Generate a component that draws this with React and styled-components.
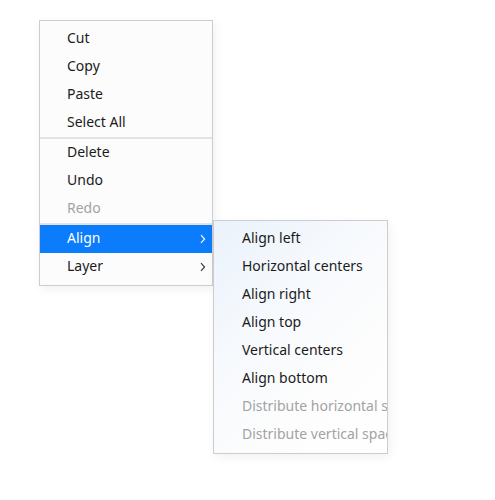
import React from "react";
import styled, { createGlobalStyle } from "styled-components";

const Global = createGlobalStyle`
  html, body { margin: 0; padding: 0; background: #ffffff; }
  body { font-family: "Noto Sans", "Open Sans", sans-serif; }
`;

const Page = styled.div`
  width: 495px;
  height: 500px;
  padding: 20px 0 0 39px;
  box-sizing: border-box;
`;

const Menu = styled.ul`
  list-style: none;
  margin: 0;
  padding: 4px 0;
  width: ${(p) => p.$width}px;
  box-sizing: border-box;
  border: 1px solid #cdcdcd;
  background: ${(p) =>
    p.$sub
      ? "linear-gradient(135deg, #eaf2fb 0%, #f6f9fd 35%, #fdfdfd 70%, #ffffff 100%)"
      : "#fcfcfc"};
  box-shadow: 2px 3px 10px rgba(0, 0, 0, 0.06);
`;

const SubMenu = styled(Menu)`
  position: absolute;
  left: calc(100% + 1px);
  top: -5px;
  z-index: 2;
  overflow: hidden;
`;

const Item = styled.li`
  position: relative;
  height: 28px;
  box-sizing: border-box;
  display: flex;
  align-items: center;
  padding: 0 ${(p) => (p.$sub ? 0 : 6)}px 4px ${(p) => (p.$sub ? 28 : 27)}px;
  font-size: 14px;
  white-space: nowrap;
  color: ${(p) => (p.$active ? "#ffffff" : p.$disabled ? "#a3a3a3" : "#1b1b1b")};
  background: ${(p) => (p.$active ? "#0b7dfc" : "transparent")};
`;

const Label = styled.span`
  flex: 1;
`;

const ChevronBox = styled.span`
  display: flex;
  align-items: center;
  margin-top: 4px;
`;

const Separator = styled.li`
  height: 2px;
  background: #e3e3e3;
`;

const Chevron = ({ color }) => (
  <ChevronBox>
    <svg width="6" height="10" viewBox="0 0 6 10">
      <path d="M1 1.2 L4.6 5 L1 8.8" fill="none" stroke={color} strokeWidth="1.1" />
    </svg>
  </ChevronBox>
);

const subItems = [
  ["Align left"],
  ["Horizontal centers"],
  ["Align right"],
  ["Align top"],
  ["Vertical centers"],
  ["Align bottom"],
  ["Distribute horizontal spacing", true],
  ["Distribute vertical spacing", true],
];

export default function App() {
  return (
    <Page>
      <Global />
      <Menu $width={174}>
        <Item><Label>Cut</Label></Item>
        <Item><Label>Copy</Label></Item>
        <Item><Label>Paste</Label></Item>
        <Item><Label>Select All</Label></Item>
        <Separator />
        <Item><Label>Delete</Label></Item>
        <Item><Label>Undo</Label></Item>
        <Item $disabled><Label>Redo</Label></Item>
        <Separator />
        <Item $active>
          <Label>Align</Label>
          <Chevron color="#ffffff" />
          <SubMenu $sub $width={175}>
            {subItems.map(([t, d]) => (
              <Item key={t} $sub $disabled={d}>
                <Label>{t}</Label>
              </Item>
            ))}
          </SubMenu>
        </Item>
        <Item>
          <Label>Layer</Label>
          <Chevron color="#333333" />
        </Item>
      </Menu>
    </Page>
  );
}
